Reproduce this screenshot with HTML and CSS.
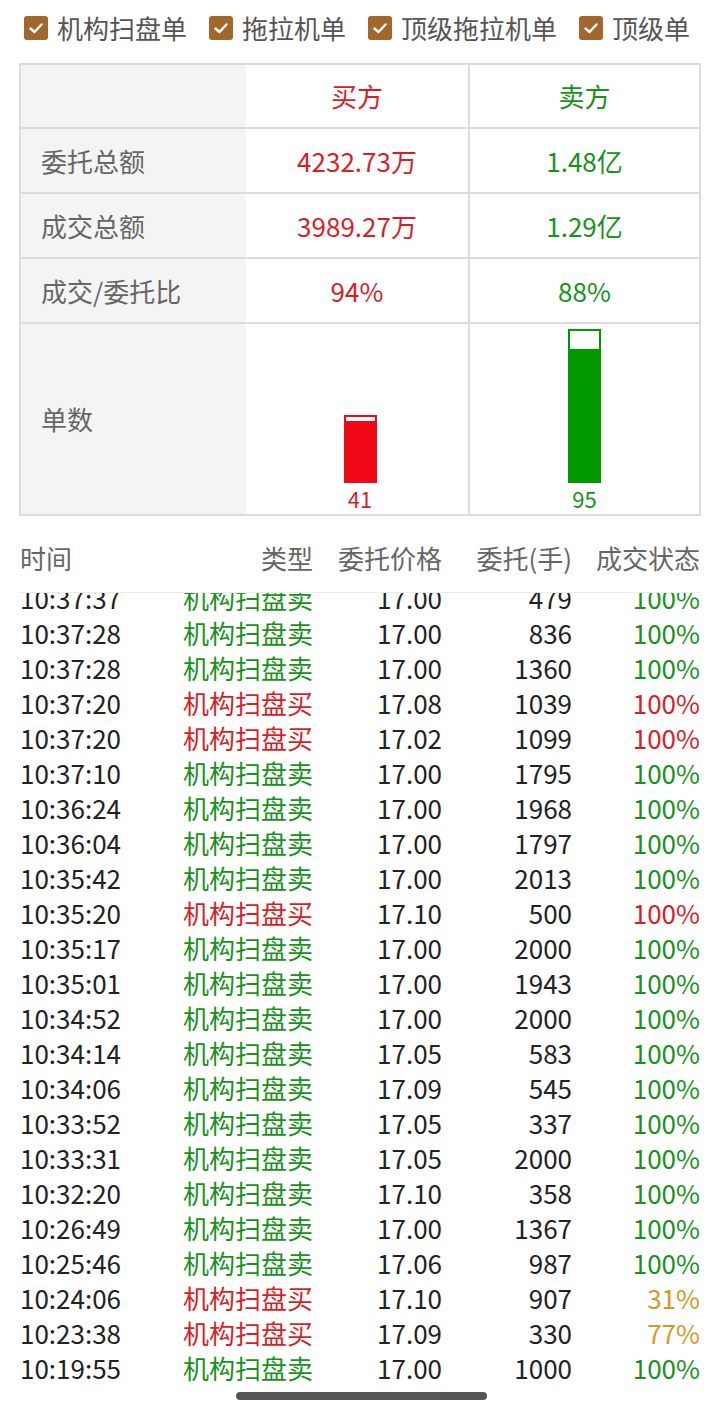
FILE: index.html
```html
<!DOCTYPE html>
<html lang="zh-CN">
<head>
<meta charset="utf-8">
<title>机构扫盘</title>
<link rel="stylesheet" href="styles.css">
</head>
<body>
<div class="page">
  <div class="filters">
    <label class="filter"><span class="box"><svg viewBox="0 0 24 24" width="24" height="24"><path d="M6.5 12.5 L10.5 16 L17.5 8.5" fill="none" stroke="#fff" stroke-width="2.4" stroke-linecap="round" stroke-linejoin="round"/></svg></span>机构扫盘单</label>
    <label class="filter"><span class="box"><svg viewBox="0 0 24 24" width="24" height="24"><path d="M6.5 12.5 L10.5 16 L17.5 8.5" fill="none" stroke="#fff" stroke-width="2.4" stroke-linecap="round" stroke-linejoin="round"/></svg></span>拖拉机单</label>
    <label class="filter"><span class="box"><svg viewBox="0 0 24 24" width="24" height="24"><path d="M6.5 12.5 L10.5 16 L17.5 8.5" fill="none" stroke="#fff" stroke-width="2.4" stroke-linecap="round" stroke-linejoin="round"/></svg></span>顶级拖拉机单</label>
    <label class="filter"><span class="box"><svg viewBox="0 0 24 24" width="24" height="24"><path d="M6.5 12.5 L10.5 16 L17.5 8.5" fill="none" stroke="#fff" stroke-width="2.4" stroke-linecap="round" stroke-linejoin="round"/></svg></span>顶级单</label>
  </div>

  <div class="summary">
    <div class="srow">
      <div class="label"></div>
      <div class="cell buy">买方</div>
      <div class="cell sell">卖方</div>
    </div>
    <div class="srow">
      <div class="label">委托总额</div>
      <div class="cell buy">4232.73万</div>
      <div class="cell sell">1.48亿</div>
    </div>
    <div class="srow">
      <div class="label">成交总额</div>
      <div class="cell buy">3989.27万</div>
      <div class="cell sell">1.29亿</div>
    </div>
    <div class="srow">
      <div class="label">成交/委托比</div>
      <div class="cell buy">94%</div>
      <div class="cell sell">88%</div>
    </div>
    <div class="srow barrow">
      <div class="label">单数</div>
      <div class="cell barcell">
        <div class="bar bar-buy" style="height:68px"><div class="fill" style="height:94%"></div></div>
        <div class="count buy">41</div>
      </div>
      <div class="cell barcell">
        <div class="bar bar-sell" style="height:154px"><div class="fill" style="height:88%"></div></div>
        <div class="count sell">95</div>
      </div>
    </div>
  </div>

  <div class="lhead">
    <span class="c-time">时间</span>
    <span class="c-type">类型</span>
    <span class="c-num">委托价格</span>
    <span class="c-num">委托(手)</span>
    <span class="c-num">成交状态</span>
  </div>

  <div class="listwrap">
    <div class="list">
      <div class="lrow"><span class="c-time">10:37:37</span><span class="c-type sell">机构扫盘卖</span><span class="c-num">17.00</span><span class="c-num">479</span><span class="c-num sell">100%</span></div>
      <div class="lrow"><span class="c-time">10:37:28</span><span class="c-type sell">机构扫盘卖</span><span class="c-num">17.00</span><span class="c-num">836</span><span class="c-num sell">100%</span></div>
      <div class="lrow"><span class="c-time">10:37:28</span><span class="c-type sell">机构扫盘卖</span><span class="c-num">17.00</span><span class="c-num">1360</span><span class="c-num sell">100%</span></div>
      <div class="lrow"><span class="c-time">10:37:20</span><span class="c-type buy">机构扫盘买</span><span class="c-num">17.08</span><span class="c-num">1039</span><span class="c-num buy">100%</span></div>
      <div class="lrow"><span class="c-time">10:37:20</span><span class="c-type buy">机构扫盘买</span><span class="c-num">17.02</span><span class="c-num">1099</span><span class="c-num buy">100%</span></div>
      <div class="lrow"><span class="c-time">10:37:10</span><span class="c-type sell">机构扫盘卖</span><span class="c-num">17.00</span><span class="c-num">1795</span><span class="c-num sell">100%</span></div>
      <div class="lrow"><span class="c-time">10:36:24</span><span class="c-type sell">机构扫盘卖</span><span class="c-num">17.00</span><span class="c-num">1968</span><span class="c-num sell">100%</span></div>
      <div class="lrow"><span class="c-time">10:36:04</span><span class="c-type sell">机构扫盘卖</span><span class="c-num">17.00</span><span class="c-num">1797</span><span class="c-num sell">100%</span></div>
      <div class="lrow"><span class="c-time">10:35:42</span><span class="c-type sell">机构扫盘卖</span><span class="c-num">17.00</span><span class="c-num">2013</span><span class="c-num sell">100%</span></div>
      <div class="lrow"><span class="c-time">10:35:20</span><span class="c-type buy">机构扫盘买</span><span class="c-num">17.10</span><span class="c-num">500</span><span class="c-num buy">100%</span></div>
      <div class="lrow"><span class="c-time">10:35:17</span><span class="c-type sell">机构扫盘卖</span><span class="c-num">17.00</span><span class="c-num">2000</span><span class="c-num sell">100%</span></div>
      <div class="lrow"><span class="c-time">10:35:01</span><span class="c-type sell">机构扫盘卖</span><span class="c-num">17.00</span><span class="c-num">1943</span><span class="c-num sell">100%</span></div>
      <div class="lrow"><span class="c-time">10:34:52</span><span class="c-type sell">机构扫盘卖</span><span class="c-num">17.00</span><span class="c-num">2000</span><span class="c-num sell">100%</span></div>
      <div class="lrow"><span class="c-time">10:34:14</span><span class="c-type sell">机构扫盘卖</span><span class="c-num">17.05</span><span class="c-num">583</span><span class="c-num sell">100%</span></div>
      <div class="lrow"><span class="c-time">10:34:06</span><span class="c-type sell">机构扫盘卖</span><span class="c-num">17.09</span><span class="c-num">545</span><span class="c-num sell">100%</span></div>
      <div class="lrow"><span class="c-time">10:33:52</span><span class="c-type sell">机构扫盘卖</span><span class="c-num">17.05</span><span class="c-num">337</span><span class="c-num sell">100%</span></div>
      <div class="lrow"><span class="c-time">10:33:31</span><span class="c-type sell">机构扫盘卖</span><span class="c-num">17.05</span><span class="c-num">2000</span><span class="c-num sell">100%</span></div>
      <div class="lrow"><span class="c-time">10:32:20</span><span class="c-type sell">机构扫盘卖</span><span class="c-num">17.10</span><span class="c-num">358</span><span class="c-num sell">100%</span></div>
      <div class="lrow"><span class="c-time">10:26:49</span><span class="c-type sell">机构扫盘卖</span><span class="c-num">17.00</span><span class="c-num">1367</span><span class="c-num sell">100%</span></div>
      <div class="lrow"><span class="c-time">10:25:46</span><span class="c-type sell">机构扫盘卖</span><span class="c-num">17.06</span><span class="c-num">987</span><span class="c-num sell">100%</span></div>
      <div class="lrow"><span class="c-time">10:24:06</span><span class="c-type buy">机构扫盘买</span><span class="c-num">17.10</span><span class="c-num">907</span><span class="c-num part">31%</span></div>
      <div class="lrow"><span class="c-time">10:23:38</span><span class="c-type buy">机构扫盘买</span><span class="c-num">17.09</span><span class="c-num">330</span><span class="c-num part">77%</span></div>
      <div class="lrow"><span class="c-time">10:19:55</span><span class="c-type sell">机构扫盘卖</span><span class="c-num">17.00</span><span class="c-num">1000</span><span class="c-num sell">100%</span></div>
    </div>
  </div>

  <div class="home-indicator"></div>
</div>
</body>
</html>
```

FILE: styles.css
```css
* { box-sizing: border-box; }
html, body { margin: 0; padding: 0; background: #fff; }
body {
  font-family: "Noto Sans CJK SC", "Noto Sans", sans-serif;
  color: #222;
}
.page {
  position: relative;
  width: 720px;
  height: 1412px;
  overflow: hidden;
}

.buy { color: #d81e28; }
.sell { color: #17921b; }
.part { color: #d49a25; }

/* filters */
.filters {
  display: flex;
  align-items: flex-start;
  gap: 22px;
  padding: 13px 0 0 24px;
  height: 63px;
}
.filter {
  display: flex;
  align-items: center;
  gap: 9px;
  font-size: 26px;
  line-height: 30px;
  color: #555;
}
.box {
  display: block;
  width: 24px;
  height: 24px;
  border-radius: 3px;
  background: #a1672d;
}
.box svg { display: block; }

/* summary table */
.summary {
  margin: 0 19px;
  border: 2px solid #dcdcdc;
}
.srow {
  display: grid;
  grid-template-columns: 225px 222px 231px;
  height: 65px;
  border-bottom: 2px solid #dcdcdc;
}
.srow:first-child { height: 64px; }
.srow:last-child { border-bottom: none; height: 190px; }
.label {
  background: #f4f4f4;
  color: #666;
  font-size: 26px;
  display: flex;
  align-items: center;
  padding: 0 0 1px 20px;
}
.cell {
  display: flex;
  align-items: center;
  justify-content: center;
  font-size: 26px;
  padding-bottom: 1px;
}
.srow .cell:last-child { border-left: 2px solid #dcdcdc; }

.barcell {
  flex-direction: column;
  justify-content: flex-end;
  padding-bottom: 1px;
}
.barcell:nth-child(2) { padding-left: 6px; }
.bar {
  width: 33px;
  display: flex;
  flex-direction: column;
  justify-content: flex-end;
  background: #fff;
}
.bar .fill { width: 100%; }
.bar-buy { border: 2px solid #f00a18; }
.bar-buy .fill { background: #f00a18; }
.bar-sell { border: 2px solid #009a00; }
.bar-sell .fill { background: #009a00; }
.count {
  font-size: 22px;
  line-height: 30px;
}

/* list */
.lhead, .lrow {
  display: grid;
  grid-template-columns: 110px 183px 129px 130px 128px;
  padding: 0 20px;
}
.lhead {
  margin-top: 25px;
  height: 51px;
  font-size: 26px;
  line-height: 34px;
  color: #666;
}
.c-type, .c-num { text-align: right; white-space: nowrap; }
.c-time { white-space: nowrap; }
.listwrap {
  margin: 0 20px 0 19px;
  border-top: 1px solid #ececec;
  height: 793px;
  overflow: hidden;
}
.list { margin-top: -13px; }
.listwrap .lrow { padding: 0 0 0 1px; }
.lrow {
  height: 35px;
  font-size: 26px;
  line-height: 35px;
  color: #222;
}

.home-indicator {
  position: absolute;
  left: 236px;
  top: 1392px;
  width: 251px;
  height: 8px;
  border-radius: 4px;
  background: #555;
}
```
